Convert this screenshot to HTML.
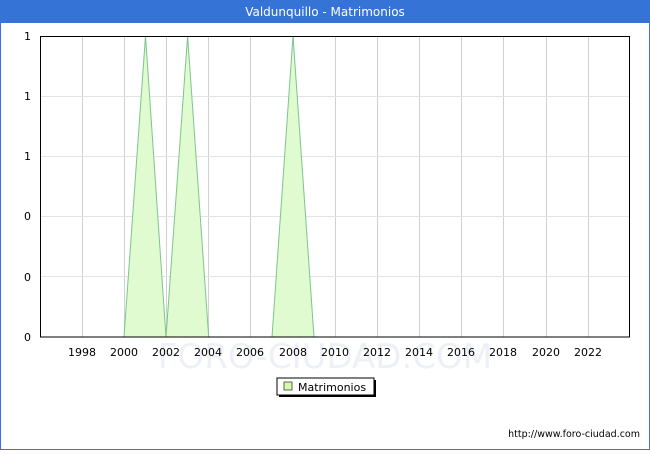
<!DOCTYPE html>
<html><head><style>
body{margin:0;width:650px;height:450px;overflow:hidden;font-family:"DejaVu Sans","Liberation Sans",sans-serif;}
</style></head><body>
<svg width="650" height="450" xmlns="http://www.w3.org/2000/svg" font-family="DejaVu Sans, Liberation Sans, sans-serif">
<rect x="0" y="0" width="650" height="450" fill="#fff"/>
<rect x="0.5" y="0.5" width="649" height="449" fill="none" stroke="#3573d6"/>
<rect x="0" y="0" width="650" height="23" fill="#3573d6"/>
<text x="325" y="16" fill="#fff" font-size="12" text-anchor="middle">Valdunquillo - Matrimonios</text>
<g stroke="#d0d0d0" stroke-width="1">
<line x1="82.5" y1="36" x2="82.5" y2="337"/><line x1="124.5" y1="36" x2="124.5" y2="337"/><line x1="166.5" y1="36" x2="166.5" y2="337"/><line x1="208.5" y1="36" x2="208.5" y2="337"/><line x1="250.5" y1="36" x2="250.5" y2="337"/><line x1="293.5" y1="36" x2="293.5" y2="337"/><line x1="335.5" y1="36" x2="335.5" y2="337"/><line x1="377.5" y1="36" x2="377.5" y2="337"/><line x1="419.5" y1="36" x2="419.5" y2="337"/><line x1="461.5" y1="36" x2="461.5" y2="337"/><line x1="503.5" y1="36" x2="503.5" y2="337"/><line x1="546.5" y1="36" x2="546.5" y2="337"/><line x1="588.5" y1="36" x2="588.5" y2="337"/>
</g>
<g stroke="#e4e4e4"><line x1="40" y1="96.5" x2="630" y2="96.5"/><line x1="40" y1="156.5" x2="630" y2="156.5"/><line x1="40" y1="216.5" x2="630" y2="216.5"/><line x1="40" y1="276.5" x2="630" y2="276.5"/></g>
<text x="325" y="368" font-size="34" fill="#eef0f8" text-anchor="middle">FORO-CIUDAD.COM</text>
<g fill="#e0fbd0" stroke="#7cc48e" stroke-width="1">
<polygon points="124,337 145.5,36 166,337"/>
<polygon points="166,337 187.6,36 208.7,337"/>
<polygon points="272,337 293,36 314,337"/>
</g>
<rect x="40.5" y="36.5" width="589" height="300.5" fill="none" stroke="#000"/>
<g font-size="11" fill="#000" text-anchor="end">
<text x="31" y="40">1</text><text x="31" y="100">1</text><text x="31" y="160">1</text><text x="31" y="220">0</text><text x="31" y="281">0</text><text x="31" y="341">0</text>
</g>
<g font-size="11" fill="#000" text-anchor="middle">
<text x="82" y="356">1998</text><text x="124" y="356">2000</text><text x="166" y="356">2002</text><text x="208" y="356">2004</text><text x="250" y="356">2006</text><text x="293" y="356">2008</text><text x="335" y="356">2010</text><text x="377" y="356">2012</text><text x="419" y="356">2014</text><text x="461" y="356">2016</text><text x="503" y="356">2018</text><text x="546" y="356">2020</text><text x="588" y="356">2022</text>
</g>
<rect x="279" y="380" width="97" height="17" fill="#000"/>
<rect x="277" y="378" width="97" height="17" fill="#fff" stroke="#000" stroke-width="1"/>
<rect x="284" y="382" width="8" height="8" fill="#d4fbb0" stroke="#000" stroke-width="0.6"/>
<text x="298" y="391" font-size="11">Matrimonios</text>
<text x="640" y="437" font-size="9.5" text-anchor="end">http://www.foro-ciudad.com</text>
</svg>
</body></html>
